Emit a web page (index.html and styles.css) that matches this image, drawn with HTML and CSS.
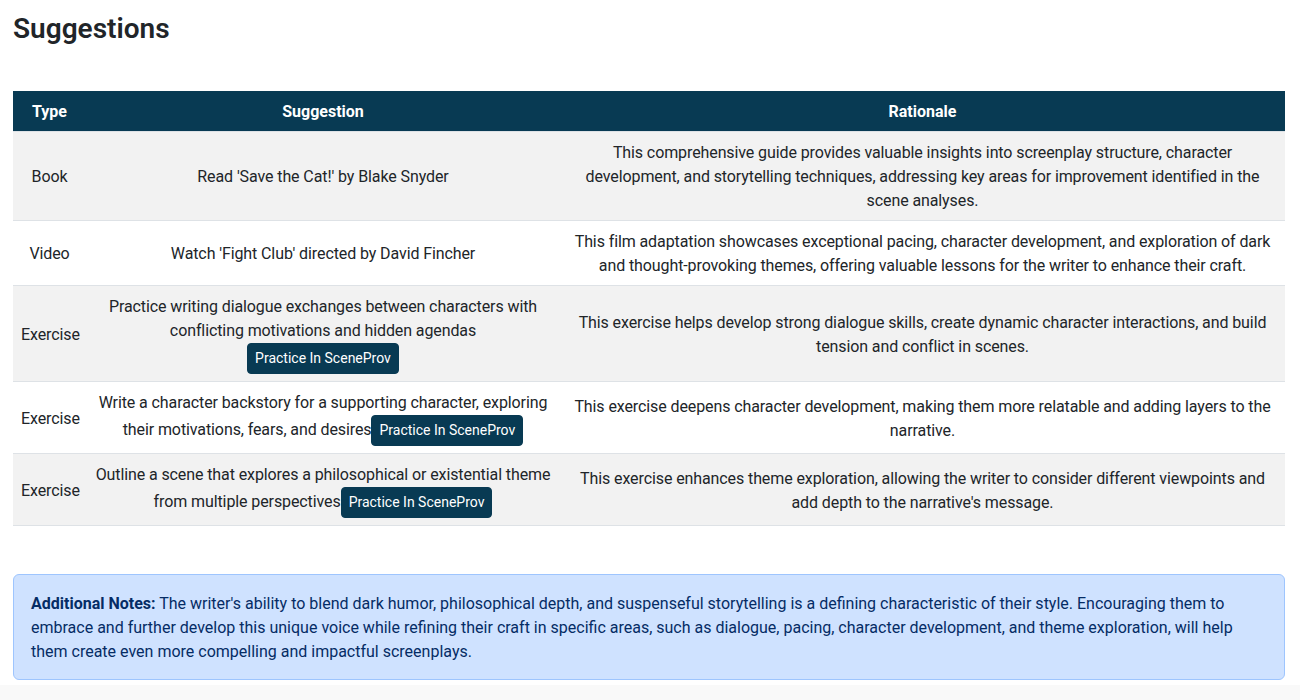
FILE: index.html
```html
<!DOCTYPE html>
<html lang="en">
<head>
<meta charset="utf-8">
<title>Suggestions</title>
<link rel="stylesheet" href="styles.css">
</head>
<body>
<main class="page">
  <h3 class="title">Suggestions</h3>
  <table class="sugg-table">
    <colgroup>
      <col class="col-type">
      <col class="col-sugg">
      <col class="col-rat">
    </colgroup>
    <thead>
      <tr><th>Type</th><th>Suggestion</th><th>Rationale</th></tr>
    </thead>
    <tbody>
      <tr>
        <td>Book</td>
        <td>Read 'Save the Cat!' by Blake Snyder</td>
        <td>This comprehensive guide provides valuable insights into screenplay structure, character development, and storytelling techniques, addressing key areas for improvement identified in the scene analyses.</td>
      </tr>
      <tr>
        <td>Video</td>
        <td>Watch 'Fight Club' directed by David Fincher</td>
        <td>This film adaptation showcases exceptional pacing, character development, and exploration of dark and thought-provoking themes, offering valuable lessons for the writer to enhance their craft.</td>
      </tr>
      <tr>
        <td>Exercise</td>
        <td>Practice writing dialogue exchanges between characters with conflicting motivations and hidden agendas<br><a class="btn" href="#">Practice In SceneProv</a></td>
        <td>This exercise helps develop strong dialogue skills, create dynamic character interactions, and build tension and conflict in scenes.</td>
      </tr>
      <tr>
        <td>Exercise</td>
        <td>Write a character backstory for a supporting character, exploring their motivations, fears, and desires<a class="btn" href="#">Practice In SceneProv</a></td>
        <td>This exercise deepens character development, making them more relatable and adding layers to the narrative.</td>
      </tr>
      <tr>
        <td>Exercise</td>
        <td>Outline a scene that explores a philosophical or existential theme from multiple perspectives<a class="btn" href="#">Practice In SceneProv</a></td>
        <td>This exercise enhances theme exploration, allowing the writer to consider different viewpoints and add depth to the narrative's message.</td>
      </tr>
    </tbody>
  </table>
  <div class="notes">
    <strong>Additional Notes:</strong> The writer's ability to blend dark humor, philosophical depth, and suspenseful storytelling is a defining characteristic of their style. Encouraging them to embrace and further develop this unique voice while refining their craft in specific areas, such as dialogue, pacing, character development, and theme exploration, will help them create even more compelling and impactful screenplays.
  </div>
</main>
</body>
</html>
```
FILE: styles.css
```css
html {
  background: #f9f9f9;
}
body {
  margin: 0;
  font-family: Roboto, "Open Sans", sans-serif;
  font-size: 16px;
  line-height: 24px;
  color: #212529;
}
.page {
  background: #ffffff;
  padding: 12px 15px 5px 13px;
}
.title {
  margin: 0;
  font-size: 28px;
  line-height: 34px;
  font-weight: 600;
  color: #212529;
}
.sugg-table {
  width: 100%;
  table-layout: fixed;
  border-collapse: collapse;
  margin-top: 45px;
}
.col-type { width: 73px; }
.col-sugg { width: 474px; }
.col-rat { width: auto; }
.sugg-table th {
  background: #083a53;
  color: #ffffff;
  font-weight: 700;
  padding: 9px 8px 7px;
  text-align: center;
}
.sugg-table td {
  padding: 9px 8px 7px;
  text-align: center;
  vertical-align: middle;
  border-top: 1px solid #dee2e6;
  letter-spacing: -0.1px;
}
.sugg-table tbody tr:last-child td {
  border-bottom: 1px solid #dee2e6;
}
.sugg-table tbody tr:nth-child(odd) td {
  background: #f2f2f2;
}
.btn {
  display: inline-block;
  background: #083a53;
  color: #ffffff;
  text-decoration: none;
  font-size: 14px;
  line-height: 21px;
  padding: 4px 7px;
  border: 1px solid #083a53;
  border-radius: 4px;
  letter-spacing: 0;
}
.notes {
  margin-top: 48px;
  background: #cfe2ff;
  border: 1px solid #9ec5fe;
  border-radius: 6px;
  color: #052c65;
  padding: 17px 17px 15px;
}
.notes strong {
  font-weight: 700;
}
```
